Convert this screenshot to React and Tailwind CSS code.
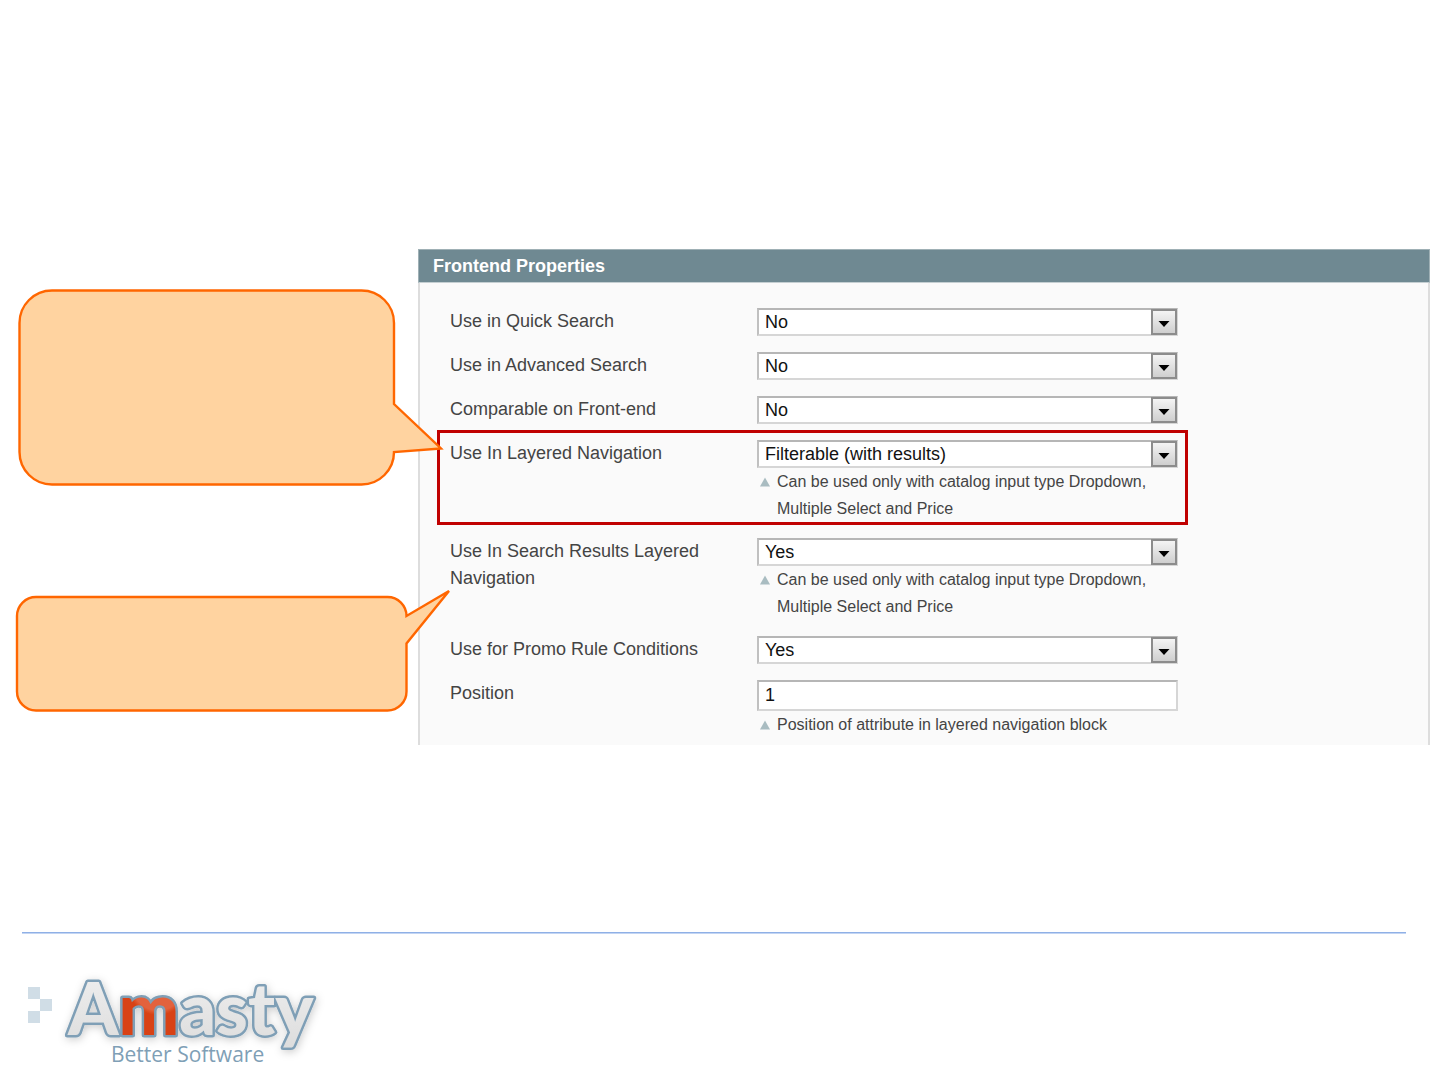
import React from 'react';

const CATALOG_NOTE = 'Can be used only with catalog input type Dropdown, Multiple Select and Price';

const FIELDS = [
  { id: 'quick_search', label: 'Use in Quick Search', value: 'No', options: ['No', 'Yes'] },
  { id: 'advanced_search', label: 'Use in Advanced Search', value: 'No', options: ['No', 'Yes'] },
  { id: 'comparable', label: 'Comparable on Front-end', value: 'No', options: ['No', 'Yes'] },
  {
    id: 'layered_navigation',
    label: 'Use In Layered Navigation',
    value: 'Filterable (with results)',
    options: ['No', 'Filterable (with results)'],
    note: CATALOG_NOTE,
    highlighted: true,
  },
  {
    id: 'search_layered_navigation',
    label: 'Use In Search Results Layered Navigation',
    value: 'Yes',
    options: ['No', 'Yes'],
    note: CATALOG_NOTE,
  },
  { id: 'promo_rules', label: 'Use for Promo Rule Conditions', value: 'Yes', options: ['No', 'Yes'] },
  { id: 'position', label: 'Position', value: '1', note: 'Position of attribute in layered navigation block' },
];

/**
 * Drop-down with the old-style square arrow button on its right
 */
function SelectBox({ id, value, options }) {
  return (
    <div className="relative">
      <select
        id={id}
        defaultValue={value}
        className="block h-7 w-full appearance-none border-2 border-[#d6d6d6] border-t-[#b6b6b6] border-l-[#c0c0c0] bg-white pr-8 pl-1.5 text-lg leading-6 text-[#111] outline-none"
      >
        {options.map((option) => (
          <option key={option}>{option}</option>
        ))}
      </select>
      <span className="pointer-events-none absolute inset-y-px right-px flex w-[26px] items-center justify-center border-2 border-[#8c8c8c] bg-linear-to-b from-[#f4f4f4] to-[#cfcfcf] pt-1">
        <svg className="h-1.5 w-3" viewBox="0 0 12 6" fill="#000">
          <path d="M0.5 0h11L6 6z" />
        </svg>
      </span>
    </div>
  );
}

/**
 * Hint under a field, with a small triangle that points up to it
 */
function Note({ children }) {
  return (
    <p className="flex gap-[7px] pl-[3px] text-base leading-[27px] text-[#444]">
      <svg className="mt-[9px] h-2.5 w-2.5 shrink-0" viewBox="0 0 10 10" fill="#a9bcc1">
        <path d="M5 0.5L10 9.5H0z" />
      </svg>
      <span>{children}</span>
    </p>
  );
}

function FieldRow({ field }) {
  return (
    <div className="relative grid grid-cols-[307px_1fr]">
      {field.highlighted && (
        <div className="pointer-events-none absolute -top-2 -right-2.5 -bottom-[3px] -left-[13px] border-3 border-[#c00000]" />
      )}
      <label htmlFor={field.id} className="pt-0.5 pr-8 text-lg leading-[27px] text-[#444]">
        {field.label}
      </label>
      <div className="pt-0.5">
        {field.options ? (
          <SelectBox id={field.id} value={field.value} options={field.options} />
        ) : (
          <input
            id={field.id}
            type="text"
            defaultValue={field.value}
            className="block h-[31px] w-full border-2 border-[#d6d6d6] border-t-[#b6b6b6] border-l-[#c0c0c0] bg-white px-1.5 text-lg text-[#111] outline-none"
          />
        )}
        {field.note && <Note>{field.note}</Note>}
      </div>
    </div>
  );
}

function Callouts() {
  return (
    <aside className="relative z-10 w-[418px] shrink-0 pt-10">
      <svg className="block overflow-visible" width="418" height="198" viewBox="0 0 418 198" fill="#ffd3a0" stroke="#ff6600" strokeWidth="2.4">
        <path d="M52 1.5H361.5A32.5 32.5 0 0 1 394 34V115L441 159.5L394 163A32.5 32.5 0 0 1 361.5 195.5H52A32.5 32.5 0 0 1 19.5 163V34A32.5 32.5 0 0 1 52 1.5Z" />
      </svg>
      <svg className="mt-[109px] block overflow-visible" width="418" height="116" viewBox="0 0 418 116" fill="#ffd3a0" stroke="#ff6600" strokeWidth="2.4">
        <path d="M36 1H387.5A19 19 0 0 1 406.5 20L449 -5L406.5 47.5V95.5A19 19 0 0 1 387.5 114.5H36A19 19 0 0 1 17 95.5V20A19 19 0 0 1 36 1Z" />
      </svg>
    </aside>
  );
}

function Logo() {
  return (
    <svg width="330" height="120" viewBox="0 0 330 120" role="img" aria-label="Amasty Better Software">
      <defs>
        <linearGradient id="letter" gradientUnits="userSpaceOnUse" x1="0" y1="22" x2="0" y2="92">
          <stop offset="0" stopColor="#ececec" />
          <stop offset="1" stopColor="#dcdcdc" />
        </linearGradient>
        <radialGradient id="accent" gradientUnits="userSpaceOnUse" cx="148" cy="25" r="30">
          <stop offset="0.85" stopColor="#e2623c" />
          <stop offset="1" stopColor="#d84315" />
        </radialGradient>
        <filter id="glow" x="-10%" y="-20%" width="120%" height="140%">
          <feDropShadow dx="1" dy="2" stdDeviation="4" floodColor="#000" floodOpacity="0.2" />
        </filter>
      </defs>
      <g fill="#d0dde6">
        <rect x="18" y="27" width="12" height="12" />
        <rect x="30" y="39" width="12" height="12" />
        <rect x="18" y="51" width="12" height="12" />
      </g>
      <text
        x="58"
        y="75"
        className="font-[Lato,sans-serif] text-[72px] font-black"
        fill="url(#letter)"
        stroke="#7f9fb6"
        strokeWidth="5"
        strokeLinejoin="round"
        paintOrder="stroke"
        filter="url(#glow)"
      >
        A<tspan fill="url(#accent)">m</tspan>asty
      </text>
      <text x="101" y="102" className="font-['Open_Sans',sans-serif] text-[21px]" fill="#7f9fb6">
        Better Software
      </text>
    </svg>
  );
}

function App() {
  return (
    <div className="min-h-screen bg-white font-['Liberation_Sans',Arial,sans-serif]">
      <main className="flex items-start pt-[249px] pr-2.5">
        <Callouts />
        <section className="min-w-0 flex-1">
          <h2 className="border border-[#9fb0b5] border-b-[#c5cfd2] bg-[#6f8992] px-3.5 text-lg leading-8 font-bold text-white">
            Frontend Properties
          </h2>
          <form className="border-x-2 border-[#dddddd] bg-[#fafafa] pt-[23px] pb-[7px] pl-[30px]">
            <div className="flex max-w-[728px] flex-col gap-3.5">
              {FIELDS.map((field) => (
                <FieldRow key={field.id} field={field} />
              ))}
            </div>
          </form>
        </section>
      </main>
      <footer className="pt-[187px] pr-[34px] pl-[22px]">
        <hr className="border-t border-b border-t-[#8fb0e6] border-b-[#c3d5f3]" />
      </footer>
      <div className="pt-[26px] pl-2.5">
        <Logo />
      </div>
    </div>
  );
}

export default App;
